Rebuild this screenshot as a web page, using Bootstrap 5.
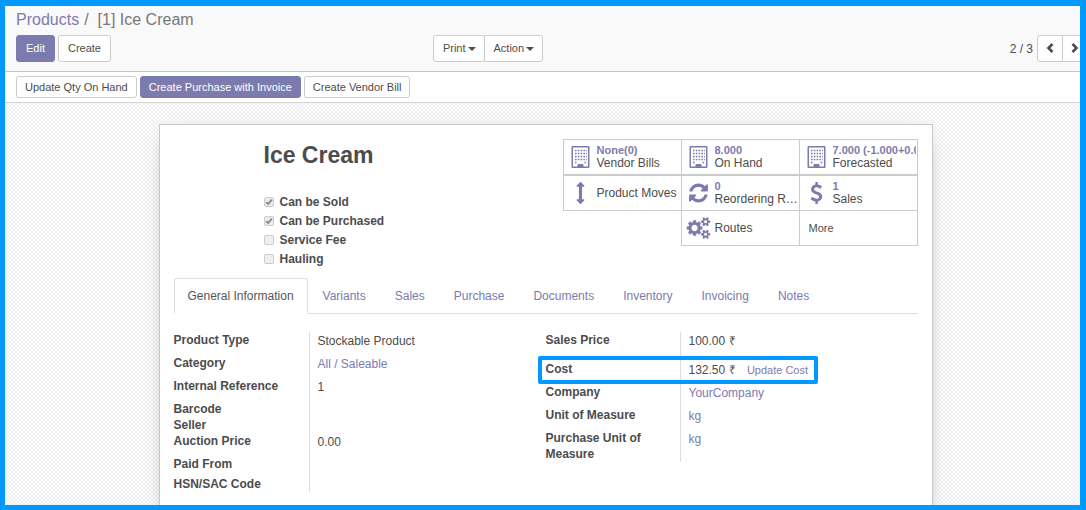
<!DOCTYPE html>
<html lang="en">
<head>
<meta charset="utf-8">
<meta name="viewport" content="width=device-width, initial-scale=1">
<title>[1] Ice Cream - Products</title>
<link rel="stylesheet" href="https://cdn.jsdelivr.net/npm/bootstrap@5.3.0/dist/css/bootstrap.min.css">
<style>
:root { --brand: #7c7bad; --ink: #4c4c4c; --frame: #0099ff; --line: #ccc; }
body { font-family: "Liberation Sans", Arial, sans-serif; font-size: 12px; line-height: 16px; color: var(--ink); background: #fff; }
a { color: var(--brand); text-decoration: none; }
.frame { border: solid var(--frame); border-width: 6px 6px 5px 5px; height: 100vh; overflow: hidden; }
.client { margin-right: -8px; min-height: 100%; }
.control-panel { background: #f9f9f9; border-bottom: 1px solid #c4c4c8; padding: 4px 0 9px 11px; }
.crumbs { font-size: 16px; line-height: 20px; color: #777; margin-bottom: 5px; --bs-breadcrumb-item-padding-x: 4px; --bs-breadcrumb-divider-color: #777; }
.crumbs .breadcrumb-item + .breadcrumb-item { padding-left: 5px; }
.crumbs .breadcrumb-item + .breadcrumb-item::before { padding-right: 9px; }
.crumbs .active { color: #777; }
.panel-grid { display: grid; grid-template-columns: 7fr 11fr; }
.record-actions { gap: 3px; }
.btn { --bs-btn-font-size: 11px; --bs-btn-line-height: 15px; --bs-btn-padding-x: 9px; --bs-btn-padding-y: 5px; --bs-btn-border-radius: 3px; }
.btn-brand { --bs-btn-color: #fff; --bs-btn-bg: var(--brand); --bs-btn-border-color: var(--brand); --bs-btn-hover-color: #fff; --bs-btn-hover-bg: #5f5e97; }
.btn-plain { --bs-btn-color: var(--ink); --bs-btn-bg: #fff; --bs-btn-border-color: #ccc; --bs-btn-hover-bg: #eee; --bs-btn-hover-border-color: #bbb; }
.control-panel .btn { height: 27px; }
.control-panel .dropdown-toggle { padding-right: 8px; }
.control-panel .dropdown-toggle::after { border-top-width: 4px; border-left-width: 4px; border-right-width: 4px; margin-left: 2px; vertical-align: 1px; }
.btn-group > .dropdown-toggle + .dropdown-toggle { margin-left: 0; border-left-width: 1px; }
.pager-btn { width: 26px; --bs-btn-padding-x: 0px; }
.pager-btn svg { width: 10px; height: 10px; display: block; margin: -2px auto 0; }
.status-bar { border-bottom: 1px solid #d4d4d4; padding: 4px 11px; gap: 3px; }
.status-bar .btn { --bs-btn-padding-x: 8px; --bs-btn-padding-y: 2px; height: 22px; }
.canvas { background: conic-gradient(#f0f0f0 25%, #f9f9f9 0 50%, #f0f0f0 0 75%, #f9f9f9 0) 0 0 / 4px 4px; padding: 21px 2px 0 0; }
.sheet { max-width: 774px; min-height: 400px; background: #fff; border: 1px solid #c8c8d3; box-shadow: 0 5px 20px -15px #000; padding: 14px 14px 20px; }
.title-block { padding-left: 90px; }
.title-block h1 { font-size: 23px; line-height: 32px; font-weight: bold; margin: 0 0 21px; }
.flag { height: 19px; gap: 6px; font-weight: bold; }
.flag input { appearance: none; width: 10px; height: 10px; margin: 1px 0 0; border: 1px solid #ccc; border-radius: 2px; background: #f0f0f0; }
.flag input:checked { background: #ececec url("data:image/svg+xml,%3Csvg xmlns='http://www.w3.org/2000/svg' viewBox='0 0 8 8'%3E%3Cpath d='M1.2 4.2 3.2 6 6.8 1.6' fill='none' stroke='%23888' stroke-width='1.9'/%3E%3C/svg%3E") center / 8px; }
.stats { width: 356px; padding-left: 1px; }
.stat { width: 119px; height: 36px; margin: -1px 0 0 -1px; padding: 0; border: 1px solid var(--line); background: #fff; color: var(--ink); text-align: left; line-height: 13px; }
.stat.first-row { margin: 0 0 1px -1px; padding-right: 1px; }
.stat svg { flex: none; width: 25px; height: 22px; margin: 0 4px; fill: var(--brand); }
.stat b { color: var(--brand); font-size: 11px; display: block; white-space: nowrap; overflow: hidden; }
.stat .stat-text { min-width: 0; flex: 1; }
.stat.stat-more { font-size: 11px; padding-left: 9px; }
.tabs { --bs-nav-tabs-border-color: #ddd; --bs-nav-tabs-border-radius: 3px; --bs-nav-link-padding-x: 13px; --bs-nav-link-padding-y: 9px; --bs-nav-link-color: var(--brand); --bs-nav-link-hover-color: #5f5e97; --bs-nav-tabs-link-active-color: #555; --bs-nav-tabs-link-active-border-color: #ddd #ddd #fff; margin-top: 10px; gap: 1px; }
.tabs .nav-link { font-size: 12px; }
.fields { margin-top: 18px; }
.field-group { margin: 0; }
.field-group dt { width: 136px; flex: none; padding-right: 24px; border-right: 1px solid #ddd; font-weight: bold; }
.field-group + .field-group dt { width: 135px; }
.field-group dd { margin: 0; padding: 1px 0 0 8px; line-height: 16px; }
.h-16 { height: 16px; } .h-20 { height: 20px; } .h-23 { height: 23px; } .h-29 { height: 29px; }
.update-cost { font-size: 11px; margin-left: 8px; }
.highlight { position: absolute; inset: -5px 100px 0 -8px; border: 4px solid var(--frame); border-radius: 2px; pointer-events: none; }
</style>
</head>
<body>
<svg class="d-none">
  <symbol id="building" viewBox="0 0 18 22"><path fill-rule="evenodd" d="M1 0h16a1 1 0 0 1 1 1v20a1 1 0 0 1-1 1H1a1 1 0 0 1-1-1V1a1 1 0 0 1 1-1zM1.500 1.500v19H6v-2h6v2h4.500v-19z"/><path fill="none" stroke="#7c7bad" stroke-width="1.500" stroke-dasharray="1.600 1.200" d="M3.500 4.500h12M3.500 7.500h12M3.500 10.500h12M3.500 13.500h12M3.500 16.500h1.600M13 16.500h1.600"/><path d="M6.500 18h5v3.500h-5z"/></symbol>
  <symbol id="arrows-v" viewBox="0 0 1792 1792"><path d="M1216 320q0 26-19 45t-45 19h-128v1024h128q26 0 45 19t19 45-19 45l-256 256q-19 19-45 19t-45-19l-256-256q-19-19-19-45t19-45 45-19h128v-1024h-128q-26 0-45-19t-19-45 19-45l256-256q19-19 45-19t45 19l256 256q19 19 19 45z"/></symbol>
  <symbol id="refresh" viewBox="0 0 1536 1792"><path d="M1511 1056q0 5-1 7-64 268-268 434.500t-478 166.500q-146 0-282.500-55t-243.500-157l-129 129q-19 19-45 19t-45-19-19-45v-448q0-26 19-45t45-19h448q26 0 45 19t19 45-19 45l-137 137q71 66 161 102t187 36q134 0 250-65t186-179q11-17 53-117 8-23 30-23h192q13 0 22.500 9.500t9.500 22.500zm25-800v448q0 26-19 45t-45 19h-448q-26 0-45-19t-19-45 19-45l138-138q-148-137-349-137-134 0-250 65t-186 179q-11 17-53 117-8 23-30 23h-199q-13 0-22.500-9.500t-9.500-22.500v-7q65-268 270-434.500t480-166.500q146 0 284 55.500t245 156.500l130-129q19-19 45-19t45 19 19 45z"/></symbol>
  <symbol id="dollar" viewBox="0 0 1792 1792"><path d="M1362 1185q0 153-99.500 263.500t-258.500 136.500v175q0 14-9 23t-23 9h-135q-13 0-22.500-9.500t-9.500-22.500v-175q-66-9-127.500-31t-101.500-44.500-74-48-46.500-37.500-17.500-18q-17-21-2-41l103-135q7-10 23-12 15-2 24 9l2 2q113 99 243 125 37 8 74 8 81 0 142.500-43t61.500-122q0-28-15-53t-33.500-42-58.500-37.500-66-32-80-32.500q-39-16-61.500-25t-61.500-26.500-62.500-31-56.500-35.500-53.500-42.500-43.500-49-35.500-58-21-66.500-8.500-78q0-138 98-242t255-134v-180q0-13 9.500-22.500t22.500-9.500h135q14 0 23 9t9 23v176q57 6 110.500 23t87 33.500 63.500 37.500 39 29 15 14q17 18 5 38l-81 146q-8 15-23 16-14 3-27-7-3-3-14.500-12t-39-26.500-58.500-32-74.500-26-85.500-11.500q-95 0-155 43t-60 111q0 26 8.500 48t29.500 41.500 39.500 33 56 31 60.500 27 70 27.500q53 20 81 31.500t76 35 75.500 42.500 62 50 53 63.500 31.500 76.500 13 94z"/></symbol>
  <symbol id="cogs" viewBox="0 0 1920 1792"><path d="M896 896q0-106-75-181t-181-75-181 75-75 181 75 181 181 75 181-75 75-181zm768 512q0-52-38-90t-90-38-90 38-38 90q0 53 37.500 90.500t90.500 37.500 90.500-37.500 37.500-90.500zm0-1024q0-52-38-90t-90-38-90 38-38 90q0 53 37.500 90.500t90.500 37.500 90.500-37.500 37.500-90.500zm-384 421v185q0 10-7 19.500t-16 10.500l-155 24q-11 35-32 76 34 48 90 115 7 11 7 20 0 12-7 19-23 30-82.500 89.500t-78.500 59.500q-11 0-21-7l-115-90q-37 19-77 31-11 108-23 155-7 24-30 24h-186q-11 0-20-7.500t-10-17.500l-23-153q-34-10-75-31l-118 89q-7 7-20 7-11 0-21-8-144-133-144-160 0-9 7-19 10-14 41-53t47-61q-23-44-35-82l-152-24q-10-1-17-9.500t-7-19.500v-185q0-10 7-19.500t16-10.500l155-24q11-35 32-76-34-48-90-115-7-11-7-20 0-12 7-20 22-30 82-89t79-59q11 0 21 7l115 90q34-18 77-32 11-108 23-154 7-24 30-24h186q11 0 20 7.500t10 17.500l23 153q34 10 75 31l118-89q8-7 20-7 11 0 21 8 144 133 144 160 0 8-7 19-12 16-42 54t-45 60q23 48 34 82l152 23q10 2 17 10.500t7 19.500zm640 533v140q0 16-149 31-12 27-30 52 51 113 51 138 0 4-4 7-122 71-124 71-8 0-46-47t-52-68q-20 2-30 2t-30-2q-14 21-52 68t-46 47q-2 0-124-71-4-3-4-7 0-25 51-138-18-25-30-52-149-15-149-31v-140q0-16 149-31 13-29 30-52-51-113-51-138 0-4 4-7 4-2 35-20t59-34 30-16q8 0 46 46.500t52 67.500q20-2 30-2t30 2q51-71 92-112l6-2q4 0 124 70 4 3 4 7 0 25-51 138 17 23 30 52 149 15 149 31zm0-1024v140q0 16-149 31-12 27-30 52 51 113 51 138 0 4-4 7-122 71-124 71-8 0-46-47t-52-68q-20 2-30 2t-30-2q-14 21-52 68t-46 47q-2 0-124-71-4-3-4-7 0-25 51-138-18-25-30-52-149-15-149-31v-140q0-16 149-31 13-29 30-52-51-113-51-138 0-4 4-7 4-2 35-20t59-34 30-16q8 0 46 46.500t52 67.500q20-2 30-2t30 2q51-71 92-112l6-2q4 0 124 70 4 3 4 7 0 25-51 138 17 23 30 52 149 15 149 31z"/></symbol>
</svg>
<div class="frame">
<div class="client d-flex flex-column">
  <header class="control-panel">
    <ol class="breadcrumb crumbs">
      <li class="breadcrumb-item"><a href="#">Products</a></li>
      <li class="breadcrumb-item active" aria-current="page">[1] Ice Cream</li>
    </ol>
    <div class="panel-grid">
      <div class="record-actions d-flex align-items-start">
        <button type="button" class="btn btn-brand">Edit</button>
        <button type="button" class="btn btn-plain">Create</button>
      </div>
      <div class="d-flex justify-content-between align-items-center">
        <div class="btn-group">
          <button type="button" class="btn btn-plain dropdown-toggle">Print</button>
          <button type="button" class="btn btn-plain dropdown-toggle">Action</button>
        </div>
        <div class="d-flex align-items-center">
          <span class="pager-count me-1">2 / 3</span>
          <div class="btn-group">
            <button type="button" class="btn btn-plain pager-btn" aria-label="Previous"><svg viewBox="0 0 10 10"><path d="M7.500 1 3.500 5l4 4" fill="none" stroke="#4c4c4c" stroke-width="2.600"/></svg></button>
            <button type="button" class="btn btn-plain pager-btn" aria-label="Next"><svg viewBox="0 0 10 10"><path d="M2.500 1l4 4-4 4" fill="none" stroke="#4c4c4c" stroke-width="2.600"/></svg></button>
          </div>
        </div>
      </div>
    </div>
  </header>
  <div class="status-bar d-flex">
    <button type="button" class="btn btn-plain">Update Qty On Hand</button>
    <button type="button" class="btn btn-brand">Create Purchase with Invoice</button>
    <button type="button" class="btn btn-plain">Create Vendor Bill</button>
  </div>
  <main class="canvas flex-grow-1">
    <section class="sheet mx-auto">
      <div class="d-flex justify-content-between align-items-start">
        <div class="title-block">
          <h1>Ice Cream</h1>
          <div class="flag d-flex align-items-center"><input type="checkbox" id="sold" checked disabled><label for="sold">Can be Sold</label></div>
          <div class="flag d-flex align-items-center"><input type="checkbox" id="purchased" checked disabled><label for="purchased">Can be Purchased</label></div>
          <div class="flag d-flex align-items-center"><input type="checkbox" id="fee" disabled><label for="fee">Service Fee</label></div>
          <div class="flag d-flex align-items-center"><input type="checkbox" id="hauling" disabled><label for="hauling">Hauling</label></div>
        </div>
        <div class="stats d-flex flex-wrap justify-content-end">
          <button type="button" class="stat first-row d-flex align-items-center"><svg><use href="#building"/></svg><span class="stat-text"><b>None(0)</b>Vendor Bills</span></button>
          <button type="button" class="stat first-row d-flex align-items-center"><svg><use href="#building"/></svg><span class="stat-text"><b>8.000</b>On Hand</span></button>
          <button type="button" class="stat first-row d-flex align-items-center"><svg><use href="#building"/></svg><span class="stat-text"><b>7.000 (-1.000+0.0</b>Forecasted</span></button>
          <button type="button" class="stat d-flex align-items-center"><svg><use href="#arrows-v"/></svg><span class="stat-text text-nowrap">Product Moves</span></button>
          <button type="button" class="stat d-flex align-items-center"><svg><use href="#refresh"/></svg><span class="stat-text"><b>0</b><span class="d-block text-nowrap">Reordering R…</span></span></button>
          <button type="button" class="stat d-flex align-items-center"><svg><use href="#dollar"/></svg><span class="stat-text"><b>1</b>Sales</span></button>
          <button type="button" class="stat d-flex align-items-center"><svg><use href="#cogs"/></svg><span class="stat-text">Routes</span></button>
          <button type="button" class="stat stat-more">More</button>
        </div>
      </div>
      <ul class="nav nav-tabs tabs">
        <li class="nav-item"><a class="nav-link active" href="#">General Information</a></li>
        <li class="nav-item"><a class="nav-link" href="#">Variants</a></li>
        <li class="nav-item"><a class="nav-link" href="#">Sales</a></li>
        <li class="nav-item"><a class="nav-link" href="#">Purchase</a></li>
        <li class="nav-item"><a class="nav-link" href="#">Documents</a></li>
        <li class="nav-item"><a class="nav-link" href="#">Inventory</a></li>
        <li class="nav-item"><a class="nav-link" href="#">Invoicing</a></li>
        <li class="nav-item"><a class="nav-link" href="#">Notes</a></li>
      </ul>
      <div class="row g-0 fields">
        <dl class="col-6 field-group">
          <div class="d-flex h-23"><dt>Product Type</dt><dd>Stockable Product</dd></div>
          <div class="d-flex h-23"><dt>Category</dt><dd><a href="#">All / Saleable</a></dd></div>
          <div class="d-flex h-23"><dt>Internal Reference</dt><dd>1</dd></div>
          <div class="d-flex h-16"><dt>Barcode</dt><dd></dd></div>
          <div class="d-flex h-16"><dt>Seller</dt><dd></dd></div>
          <div class="d-flex h-23"><dt>Auction Price</dt><dd>0.00</dd></div>
          <div class="d-flex h-20"><dt>Paid From</dt><dd></dd></div>
          <div class="d-flex h-16"><dt>HSN/SAC Code</dt><dd></dd></div>
        </dl>
        <dl class="col-6 field-group">
          <div class="d-flex h-29"><dt>Sales Price</dt><dd>100.00 ₹</dd></div>
          <div class="d-flex h-23 position-relative"><dt>Cost</dt><dd>132.50 ₹ <a href="#" class="update-cost">Update Cost</a></dd><span class="highlight"></span></div>
          <div class="d-flex h-23"><dt>Company</dt><dd><a href="#">YourCompany</a></dd></div>
          <div class="d-flex h-23"><dt>Unit of Measure</dt><dd><a href="#">kg</a></dd></div>
          <div class="d-flex"><dt>Purchase Unit of Measure</dt><dd><a href="#">kg</a></dd></div>
        </dl>
      </div>
    </section>
  </main>
</div>
</div>
<script src="https://cdn.jsdelivr.net/npm/bootstrap@5.3.0/dist/js/bootstrap.bundle.min.js"></script>
</body>
</html>
